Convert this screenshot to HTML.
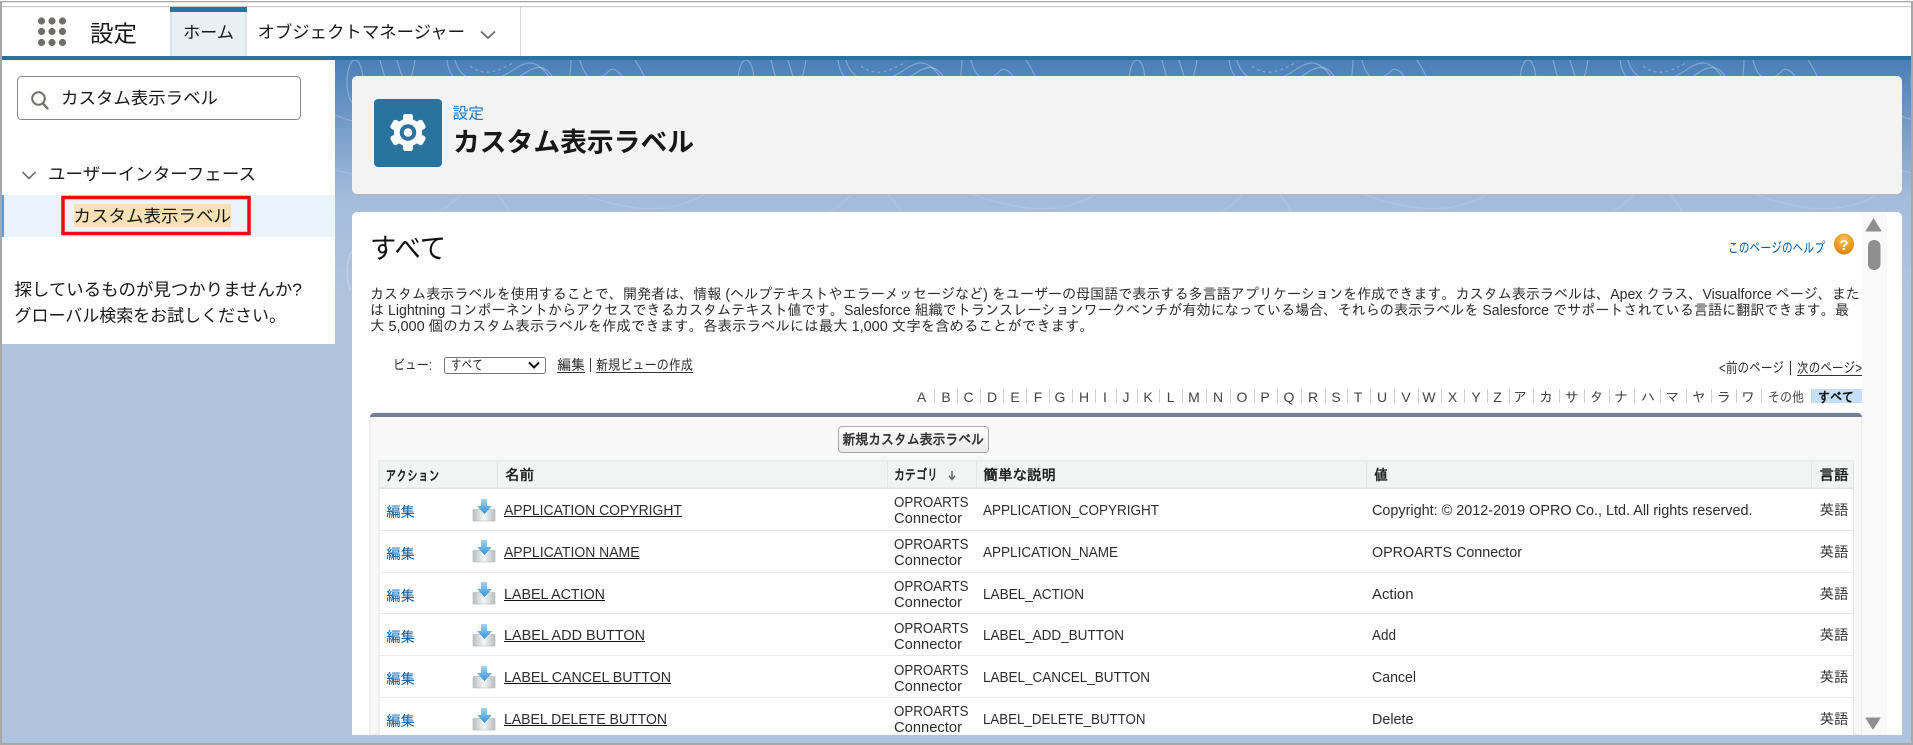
<!DOCTYPE html>
<html lang="ja">
<head>
<meta charset="utf-8">
<title>カスタム表示ラベル | 設定</title>
<style>
html,body{margin:0;padding:0;background:#fff;width:1913px;height:745px;overflow:hidden}
svg{display:block}
.n{font-family:"Liberation Sans","Noto Sans CJK JP",sans-serif;fill:#181818}
.c{font-family:"Liberation Sans","IPAGothic",sans-serif;font-size:14.6px;fill:#2c2c2c}
.b{font-weight:bold;fill:#222}
.l{fill:#015ba7}
.a{text-anchor:middle;fill:#444;font-size:14px}
</style>
</head>
<body>
<svg width="1913" height="745" viewBox="0 0 1913 745" xmlns="http://www.w3.org/2000/svg">
<defs>
<linearGradient id="bg" x1="0" y1="60" x2="0" y2="300" gradientUnits="userSpaceOnUse"><stop offset="0" stop-color="#4a7fb7"/><stop offset=".58" stop-color="#a5bcdb"/><stop offset="1" stop-color="#b0c4df"/></linearGradient>
<linearGradient id="fade" x1="0" y1="0" x2="0" y2="190" gradientUnits="userSpaceOnUse"><stop offset="0" stop-color="#fff" stop-opacity=".3"/><stop offset="1" stop-color="#fff" stop-opacity=".07"/></linearGradient>
<pattern id="topo" x="335" y="60" width="391" height="190" patternUnits="userSpaceOnUse">
<g fill="none" stroke="url(#fade)" stroke-width="1.200">
<ellipse cx="20" cy="22" rx="8" ry="22"/>
<path d="M45 0C50 20 55 35 60 42M62 0C66 15 72 30 76 40M80 0C78 15 72 30 68 45"/>
<path d="M112 0C115 30 150 40 180 20C200 5 210 0 222 25C228 40 235 30 236 0"/>
<path d="M120 0C125 22 150 28 175 12C190 2 200-4 215 18"/>
<path d="M135 6C150 18 165 10 180 2" stroke-dasharray="3 3"/>
<path d="M245 0C250 20 260 25 275 10C285 5 295 30 305 50M300 0C310 15 315 30 320 45"/>
<path d="M0 55C60 80 120 60 190 80S330 120 391 70"/>
<path d="M0 110C70 130 140 95 220 125S340 160 391 120"/>
<path d="M30 190C60 150 90 170 120 140S170 130 190 190"/>
</g>
</pattern>
<linearGradient id="tray" x1="0" y1="0" x2="1" y2="0"><stop offset="0" stop-color="#b8bcbc"/><stop offset=".5" stop-color="#f6f7f7"/><stop offset="1" stop-color="#b8bcbc"/></linearGradient>
<linearGradient id="arr" x1="0" y1="0" x2="0" y2="1"><stop offset="0" stop-color="#a6d5f2"/><stop offset="1" stop-color="#2f93d8"/></linearGradient>
<radialGradient id="org" cx=".5" cy=".3" r=".8"><stop offset="0" stop-color="#fbc14d"/><stop offset="1" stop-color="#d97a06"/></radialGradient>
<g id="dl">
<rect x="473" y="509.500" width="22" height="11.500" fill="url(#tray)" stroke="#b5b9b9" stroke-width=".6"/>
<path d="M481 499h6v7h5l-7.500 8-7.500-8h4z" fill="url(#arr)"/>
</g>
<linearGradient id="btn" x1="0" y1="0" x2="0" y2="1"><stop offset="0" stop-color="#fdfdfd"/><stop offset="1" stop-color="#eaeaea"/></linearGradient>
</defs>

<!-- outer frame + nav -->
<rect width="1913" height="745" fill="#fff"/>
<rect x="2" y="60" width="1909" height="683" fill="url(#bg)"/>
<rect x="335" y="60" width="1576" height="230" fill="url(#topo)"/>
<rect x="2" y="6" width="1909" height="1.200" fill="#c9c9c9"/>
<rect x="170" y="7" width="77" height="49" fill="#e9f0f4"/>
<rect x="170" y="7" width="77" height="5" fill="#2b739f"/>
<rect x="170.500" y="12" width="1" height="44" fill="#cfd6db"/>
<rect x="245.500" y="12" width="1" height="44" fill="#cfd6db"/>
<rect x="520" y="7" width="1" height="49" fill="#d6d6d6"/>
<rect x="2" y="56" width="1909" height="4" fill="#2b739f"/>
<g fill="#706e6b">
<circle cx="41.500" cy="21" r="3.600"/><circle cx="52" cy="21" r="3.600"/><circle cx="62.500" cy="21" r="3.600"/>
<circle cx="41.500" cy="31.500" r="3.600"/><circle cx="52" cy="31.500" r="3.600"/><circle cx="62.500" cy="31.500" r="3.600"/>
<circle cx="41.500" cy="42.500" r="3.600"/><circle cx="52" cy="42.500" r="3.600"/><circle cx="62.500" cy="42.500" r="3.600"/>
</g>
<text class="n" x="90" y="41.500" font-size="23" textLength="47" lengthAdjust="spacingAndGlyphs">設定</text>
<text class="n" x="183" y="38" font-size="16.500" textLength="51" lengthAdjust="spacingAndGlyphs">ホーム</text>
<text class="n" x="257.500" y="38" font-size="17.300" textLength="207.500" lengthAdjust="spacingAndGlyphs">オブジェクトマネージャー</text>
<path d="M481 31.500l7 6.500 7-6.500" fill="none" stroke="#706e6b" stroke-width="1.800"/>

<!-- sidebar -->
<rect x="2" y="60" width="333" height="284" fill="#fff"/>
<rect x="17.500" y="76.500" width="283" height="43" rx="4" fill="#fff" stroke="#8a8886" stroke-width="1"/>
<circle cx="38.500" cy="98.500" r="6.300" fill="none" stroke="#706e6b" stroke-width="2"/>
<path d="M43 103.500l4.500 5" stroke="#706e6b" stroke-width="2.400" fill="none" stroke-linecap="round"/>
<text class="n" x="61" y="104" font-size="17.300" textLength="157" lengthAdjust="spacingAndGlyphs">カスタム表示ラベル</text>
<path d="M22.500 172l6.500 6.500 6.500-6.500" fill="none" stroke="#706e6b" stroke-width="1.600"/>
<text class="n" x="48" y="180" font-size="17.300" textLength="208" lengthAdjust="spacingAndGlyphs">ユーザーインターフェース</text>
<rect x="2" y="195" width="333" height="42" fill="#ebf3fc"/>
<rect x="2" y="195" width="2" height="42" fill="#5a96d8"/>
<rect x="74" y="204" width="157" height="23" fill="#f9e0b5"/>
<rect x="63" y="197.500" width="186" height="36" fill="none" stroke="#ee0a14" stroke-width="3.500"/>
<text class="n" x="73.500" y="222" font-size="17.300" textLength="157.500" lengthAdjust="spacingAndGlyphs">カスタム表示ラベル</text>
<text class="n" x="14.500" y="295.500" font-size="17.300" textLength="287.500" lengthAdjust="spacingAndGlyphs">探しているものが見つかりませんか?</text>
<text class="n" x="14.500" y="321.500" font-size="17.300" textLength="271.500" lengthAdjust="spacingAndGlyphs">グローバル検索をお試しください。</text>

<!-- page header card -->
<rect x="352" y="77" width="1550" height="118" rx="5" fill="#b3b8bd"/>
<rect x="352" y="76" width="1550" height="118" rx="5" fill="#f3f3f3"/>
<rect x="374" y="99" width="68" height="68" rx="4" fill="#2b739f"/>
<g fill="#fff">
<circle cx="408" cy="132.500" r="14"/>
<rect x="403" y="114" width="10" height="9" rx="2.500"/>
<rect x="403" y="114" width="10" height="9" rx="2.500" transform="rotate(60 408 132.500)"/>
<rect x="403" y="114" width="10" height="9" rx="2.500" transform="rotate(120 408 132.500)"/>
<rect x="403" y="114" width="10" height="9" rx="2.500" transform="rotate(180 408 132.500)"/>
<rect x="403" y="114" width="10" height="9" rx="2.500" transform="rotate(240 408 132.500)"/>
<rect x="403" y="114" width="10" height="9" rx="2.500" transform="rotate(300 408 132.500)"/>
</g>
<circle cx="408" cy="132.500" r="8.300" fill="#2b739f"/>
<circle cx="408" cy="132.500" r="4.300" fill="#fff"/>
<text class="n" x="452.500" y="118.500" font-size="15.500" style="fill:#1b76c9" textLength="31.500" lengthAdjust="spacingAndGlyphs">設定</text>
<text class="n" x="453" y="151.500" font-size="26.500" font-weight="bold" textLength="241" lengthAdjust="spacingAndGlyphs">カスタム表示ラベル</text>

<!-- main card -->
<rect x="352" y="212" width="1550" height="523" rx="5" fill="#fff"/>
<rect x="352" y="730" width="1550" height="5" fill="#fff"/>
<text class="c" x="370" y="258" style="font-family:'Liberation Sans','Noto Sans CJK JP',sans-serif;font-size:28px;fill:#111" textLength="76" lengthAdjust="spacingAndGlyphs">すべて</text>
<text class="c l" x="1728" y="253" textLength="97" lengthAdjust="spacingAndGlyphs">このページのヘルプ</text>
<ellipse cx="1844" cy="244" rx="10" ry="10.500" fill="url(#org)"/>
<text x="1844" y="250" text-anchor="middle" style="font-family:'Liberation Sans',sans-serif;font-weight:bold;font-size:15px;fill:#fff">?</text>

<text class="c" x="370" y="299" textLength="1490" lengthAdjust="spacingAndGlyphs">カスタム表示ラベルを使用することで、開発者は、情報 (ヘルプテキストやエラーメッセージなど) をユーザーの母国語で表示する多言語アプリケーションを作成できます。カスタム表示ラベルは、Apex クラス、Visualforce ページ、また</text>
<text class="c" x="370" y="315" textLength="1479" lengthAdjust="spacingAndGlyphs">は Lightning コンポーネントからアクセスできるカスタムテキスト値です。Salesforce 組織でトランスレーションワークベンチが有効になっている場合、それらの表示ラベルを Salesforce でサポートされている言語に翻訳できます。最</text>
<text class="c" x="370" y="331" textLength="724" lengthAdjust="spacingAndGlyphs">大 5,000 個のカスタム表示ラベルを作成できます。各表示ラベルには最大 1,000 文字を含めることができます。</text>

<text class="c" x="393" y="370" textLength="39" lengthAdjust="spacingAndGlyphs">ビュー:</text>
<rect x="444.500" y="357.500" width="101" height="16" rx="2" fill="#fff" stroke="#767676"/>
<text class="c" x="451" y="370" textLength="32" lengthAdjust="spacingAndGlyphs">すべて</text>
<path d="M529 362.500l5 5 5-5" fill="none" stroke="#111" stroke-width="2"/>
<text class="c" x="557" y="370" textLength="28" lengthAdjust="spacingAndGlyphs">編集</text>
<rect x="557" y="372" width="28" height="1" fill="#333"/>
<rect x="590" y="358" width="1" height="14" fill="#333"/>
<text class="c" x="596" y="370" textLength="97" lengthAdjust="spacingAndGlyphs">新規ビューの作成</text>
<rect x="596" y="372" width="97" height="1" fill="#333"/>

<text class="c" x="1719" y="373" textLength="65" lengthAdjust="spacingAndGlyphs">&lt;前のページ</text>
<rect x="1790" y="361" width="1" height="14" fill="#333"/>
<text class="c" x="1797" y="373" textLength="65" lengthAdjust="spacingAndGlyphs">次のページ&gt;</text>
<rect x="1797" y="375" width="65" height="1" fill="#333"/>

<!-- alpha filter -->
<rect x="1812" y="389" width="50" height="14" fill="#c5dffb"/>
<g fill="#cfcfcf">
<rect x="934" y="389" width="1" height="14"/><rect x="957" y="389" width="1" height="14"/><rect x="980" y="389" width="1" height="14"/><rect x="1003" y="389" width="1" height="14"/><rect x="1026" y="389" width="1" height="14"/><rect x="1049" y="389" width="1" height="14"/><rect x="1072" y="389" width="1" height="14"/><rect x="1095" y="389" width="1" height="14"/><rect x="1116" y="389" width="1" height="14"/><rect x="1137" y="389" width="1" height="14"/><rect x="1159" y="389" width="1" height="14"/><rect x="1182" y="389" width="1" height="14"/><rect x="1206" y="389" width="1" height="14"/><rect x="1230" y="389" width="1" height="14"/><rect x="1254" y="389" width="1" height="14"/><rect x="1277" y="389" width="1" height="14"/><rect x="1301" y="389" width="1" height="14"/><rect x="1325" y="389" width="1" height="14"/><rect x="1347" y="389" width="1" height="14"/><rect x="1370" y="389" width="1" height="14"/><rect x="1394" y="389" width="1" height="14"/><rect x="1418" y="389" width="1" height="14"/><rect x="1441" y="389" width="1" height="14"/><rect x="1464" y="389" width="1" height="14"/><rect x="1487" y="389" width="1" height="14"/><rect x="1509" y="389" width="1" height="14"/><rect x="1533" y="389" width="1" height="14"/><rect x="1559" y="389" width="1" height="14"/><rect x="1584" y="389" width="1" height="14"/><rect x="1609" y="389" width="1" height="14"/><rect x="1634" y="389" width="1" height="14"/><rect x="1660" y="389" width="1" height="14"/><rect x="1686" y="389" width="1" height="14"/><rect x="1711" y="389" width="1" height="14"/><rect x="1736" y="389" width="1" height="14"/><rect x="1761" y="389" width="1" height="14"/><rect x="1811" y="389" width="1" height="14"/>
</g>
<g>
<text class="c a" x="921.600" y="402">A</text><text class="c a" x="946" y="402">B</text><text class="c a" x="968.600" y="402">C</text><text class="c a" x="992" y="402">D</text><text class="c a" x="1015" y="402">E</text><text class="c a" x="1038" y="402">F</text><text class="c a" x="1060" y="402">G</text><text class="c a" x="1084" y="402">H</text><text class="c a" x="1105" y="402">I</text><text class="c a" x="1126" y="402">J</text><text class="c a" x="1148" y="402">K</text><text class="c a" x="1170.600" y="402">L</text><text class="c a" x="1194" y="402">M</text><text class="c a" x="1218" y="402">N</text><text class="c a" x="1242" y="402">O</text><text class="c a" x="1265" y="402">P</text><text class="c a" x="1289" y="402">Q</text><text class="c a" x="1313" y="402">R</text><text class="c a" x="1336" y="402">S</text><text class="c a" x="1358" y="402">T</text><text class="c a" x="1382" y="402">U</text><text class="c a" x="1406" y="402">V</text><text class="c a" x="1429" y="402">W</text><text class="c a" x="1452.600" y="402">X</text><text class="c a" x="1476" y="402">Y</text><text class="c a" x="1497.500" y="402">Z</text><text class="c a" x="1520" y="402">ア</text><text class="c a" x="1546" y="402">カ</text><text class="c a" x="1571.500" y="402">サ</text><text class="c a" x="1596.600" y="402">タ</text><text class="c a" x="1621" y="402">ナ</text><text class="c a" x="1648" y="402">ハ</text><text class="c a" x="1672.500" y="402">マ</text><text class="c a" x="1698.700" y="402">ヤ</text><text class="c a" x="1724" y="402">ラ</text><text class="c a" x="1748" y="402">ワ</text>
<text class="c a" x="1786" y="402" textLength="36" lengthAdjust="spacingAndGlyphs">その他</text>
<text class="c a b" x="1836" y="402" textLength="36" lengthAdjust="spacingAndGlyphs" style="fill:#111">すべて</text>
</g>

<!-- table panel -->
<path d="M370 735V419a6 6 0 0 1 6-6H1856a6 6 0 0 1 6 6V735z" fill="#f8f8f8" stroke="#e0e3e5"/>
<path d="M370 417a4 4 0 0 1 4-4H1858a4 4 0 0 1 4 4z" fill="#747e96"/>
<rect x="838.500" y="426.500" width="150" height="26" rx="3.500" fill="url(#btn)" stroke="#a9a9a9"/>
<text class="c b" x="842.500" y="444.500" textLength="141.500" lengthAdjust="spacingAndGlyphs" style="fill:#333">新規カスタム表示ラベル</text>
<rect x="1862" y="212" width="25" height="523" fill="#f9f9f9"/>
<path d="M1873.500 219l7.500 12h-15z" fill="#8f8f8f" stroke="#8f8f8f" stroke-linejoin="round"/>
<rect x="1868" y="240" width="12.500" height="30" rx="6" fill="#8f8f8f"/>
<path d="M1873 729l7-11h-14z" fill="#8f8f8f" stroke="#8f8f8f" stroke-linejoin="round"/>

<rect x="379" y="461" width="1474" height="274" fill="#fff"/>
<rect x="379" y="461" width="1474" height="27" fill="#f2f3f3"/>
<rect x="379" y="460.500" width="1474" height="1" fill="#e0e3e5"/>
<rect x="379" y="487.500" width="1474" height="1.500" fill="#e0e3e5"/>
<rect x="378.500" y="461" width="1" height="274" fill="#e0e3e5"/>
<rect x="1853" y="461" width="1" height="274" fill="#e0e3e5"/>
<g fill="#e3e6e8"><rect x="497" y="461" width="1" height="27"/><rect x="887" y="461" width="1" height="27"/><rect x="976" y="461" width="1" height="27"/><rect x="1366" y="461" width="1" height="27"/><rect x="1811" y="461" width="1" height="27"/></g>
<g fill="#e8eaeb"><rect x="379" y="530" width="1474" height="1"/><rect x="379" y="572" width="1474" height="1"/><rect x="379" y="613" width="1474" height="1"/><rect x="379" y="655" width="1474" height="1"/><rect x="379" y="697" width="1474" height="1"/></g>

<text class="c b" x="385.500" y="481" textLength="54" lengthAdjust="spacingAndGlyphs">アクション</text>
<text class="c b" x="505" y="480" textLength="29" lengthAdjust="spacingAndGlyphs">名前</text>
<text class="c b" x="894" y="480" textLength="44" lengthAdjust="spacingAndGlyphs">カテゴリ</text>
<path d="M952 471v8M949 476l3 3.500 3-3.500" stroke="#666" fill="none" stroke-width="1.500"/>
<text class="c b" x="983.500" y="480" textLength="72.500" lengthAdjust="spacingAndGlyphs">簡単な説明</text>
<text class="c b" x="1374" y="480" textLength="14" lengthAdjust="spacingAndGlyphs">値</text>
<text class="c b" x="1819.500" y="480" textLength="29" lengthAdjust="spacingAndGlyphs">言語</text>

<!-- row 1 -->
<text class="c l" x="386" y="517" textLength="29" lengthAdjust="spacingAndGlyphs">編集</text>
<use href="#dl"/>
<text class="c" x="504" y="515" textLength="178" lengthAdjust="spacingAndGlyphs">APPLICATION COPYRIGHT</text><rect x="504" y="516" width="178" height="1" fill="#111"/>
<text class="c" x="894" y="507" textLength="74.500" lengthAdjust="spacingAndGlyphs">OPROARTS</text>
<text class="c" x="894" y="523" textLength="68" lengthAdjust="spacingAndGlyphs">Connector</text>
<text class="c" x="983" y="515" textLength="176" lengthAdjust="spacingAndGlyphs">APPLICATION_COPYRIGHT</text>
<text class="c" x="1372" y="515" textLength="380.500" lengthAdjust="spacingAndGlyphs">Copyright: © 2012-2019 OPRO Co., Ltd. All rights reserved.</text>
<text class="c" x="1819.500" y="515" textLength="29" lengthAdjust="spacingAndGlyphs">英語</text>
<!-- row 2 -->
<text class="c l" x="386" y="559" textLength="29" lengthAdjust="spacingAndGlyphs">編集</text>
<use href="#dl" y="41"/>
<text class="c" x="504" y="557" textLength="135.500" lengthAdjust="spacingAndGlyphs">APPLICATION NAME</text><rect x="504" y="558" width="135.500" height="1" fill="#111"/>
<text class="c" x="894" y="549" textLength="74.500" lengthAdjust="spacingAndGlyphs">OPROARTS</text>
<text class="c" x="894" y="565" textLength="68" lengthAdjust="spacingAndGlyphs">Connector</text>
<text class="c" x="983" y="557" textLength="135" lengthAdjust="spacingAndGlyphs">APPLICATION_NAME</text>
<text class="c" x="1372" y="557" textLength="150" lengthAdjust="spacingAndGlyphs">OPROARTS Connector</text>
<text class="c" x="1819.500" y="557" textLength="29" lengthAdjust="spacingAndGlyphs">英語</text>
<!-- row 3 -->
<text class="c l" x="386" y="601" textLength="29" lengthAdjust="spacingAndGlyphs">編集</text>
<use href="#dl" y="83"/>
<text class="c" x="504" y="599" textLength="101" lengthAdjust="spacingAndGlyphs">LABEL ACTION</text><rect x="504" y="600" width="101" height="1" fill="#111"/>
<text class="c" x="894" y="591" textLength="74.500" lengthAdjust="spacingAndGlyphs">OPROARTS</text>
<text class="c" x="894" y="607" textLength="68" lengthAdjust="spacingAndGlyphs">Connector</text>
<text class="c" x="983" y="599" textLength="101" lengthAdjust="spacingAndGlyphs">LABEL_ACTION</text>
<text class="c" x="1372" y="599" textLength="41.500" lengthAdjust="spacingAndGlyphs">Action</text>
<text class="c" x="1819.500" y="599" textLength="29" lengthAdjust="spacingAndGlyphs">英語</text>
<!-- row 4 -->
<text class="c l" x="386" y="642" textLength="29" lengthAdjust="spacingAndGlyphs">編集</text>
<use href="#dl" y="125"/>
<text class="c" x="504" y="640" textLength="141" lengthAdjust="spacingAndGlyphs">LABEL ADD BUTTON</text><rect x="504" y="641" width="141" height="1" fill="#111"/>
<text class="c" x="894" y="633" textLength="74.500" lengthAdjust="spacingAndGlyphs">OPROARTS</text>
<text class="c" x="894" y="649" textLength="68" lengthAdjust="spacingAndGlyphs">Connector</text>
<text class="c" x="983" y="640" textLength="141" lengthAdjust="spacingAndGlyphs">LABEL_ADD_BUTTON</text>
<text class="c" x="1372" y="640" textLength="24" lengthAdjust="spacingAndGlyphs">Add</text>
<text class="c" x="1819.500" y="640" textLength="29" lengthAdjust="spacingAndGlyphs">英語</text>
<!-- row 5 -->
<text class="c l" x="386" y="684" textLength="29" lengthAdjust="spacingAndGlyphs">編集</text>
<use href="#dl" y="167"/>
<text class="c" x="504" y="682" textLength="167" lengthAdjust="spacingAndGlyphs">LABEL CANCEL BUTTON</text><rect x="504" y="683" width="167" height="1" fill="#111"/>
<text class="c" x="894" y="675" textLength="74.500" lengthAdjust="spacingAndGlyphs">OPROARTS</text>
<text class="c" x="894" y="691" textLength="68" lengthAdjust="spacingAndGlyphs">Connector</text>
<text class="c" x="983" y="682" textLength="167" lengthAdjust="spacingAndGlyphs">LABEL_CANCEL_BUTTON</text>
<text class="c" x="1372" y="682" textLength="44" lengthAdjust="spacingAndGlyphs">Cancel</text>
<text class="c" x="1819.500" y="682" textLength="29" lengthAdjust="spacingAndGlyphs">英語</text>
<!-- row 6 -->
<text class="c l" x="386" y="726" textLength="29" lengthAdjust="spacingAndGlyphs">編集</text>
<use href="#dl" y="209"/>
<text class="c" x="504" y="724" textLength="163" lengthAdjust="spacingAndGlyphs">LABEL DELETE BUTTON</text><rect x="504" y="725" width="163" height="1" fill="#111"/>
<text class="c" x="894" y="716" textLength="74.500" lengthAdjust="spacingAndGlyphs">OPROARTS</text>
<text class="c" x="894" y="732" textLength="68" lengthAdjust="spacingAndGlyphs">Connector</text>
<text class="c" x="983" y="724" textLength="162.500" lengthAdjust="spacingAndGlyphs">LABEL_DELETE_BUTTON</text>
<text class="c" x="1372" y="724" textLength="41.500" lengthAdjust="spacingAndGlyphs">Delete</text>
<text class="c" x="1819.500" y="724" textLength="29" lengthAdjust="spacingAndGlyphs">英語</text>

<!-- clip below the card -->
<rect x="2" y="735" width="1909" height="8" fill="#b0c4df"/>
<!-- outer frame -->
<rect x="0" y="0" width="1913" height="1" fill="#fff"/>
<rect x="0" y="1" width="1913" height="1.300" fill="#a8a8a8"/>
<rect x="0" y="1" width="2" height="744" fill="#a8a8a8"/>
<rect x="1911" y="1" width="2" height="744" fill="#a8a8a8"/>
<rect x="0" y="743" width="1913" height="2" fill="#a8a8a8"/>
</svg>
</body>
</html>
